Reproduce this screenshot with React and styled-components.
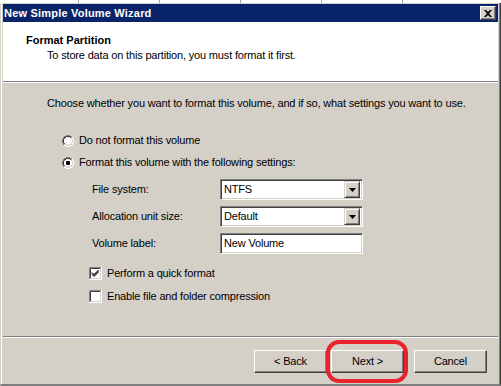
import React from 'react';
import styled, { createGlobalStyle } from 'styled-components';

const GlobalStyle = createGlobalStyle`
  html, body {
    margin: 0;
    padding: 0;
    background: #ffffff;
  }
  body {
    font-family: 'Liberation Sans', Arial, sans-serif;
    font-size: 11px;
    letter-spacing: -0.17px;
    color: #000000;
  }
`;

const Page = styled.div`
  width: 501px;
  height: 386px;
  display: flex;
  flex-direction: column;
  overflow: hidden;
`;

const TopStrip = styled.div`
  height: 3px;
  flex: none;
  background: #ffffff;
  display: flex;
  gap: 80px;
  padding-left: 78px;
  & > span {
    width: 1px;
    height: 3px;
    background: #a0a0a0;
  }
`;

const Frame = styled.div`
  flex: 1;
  display: flex;
  flex-direction: column;
  background: #d4d0c8;
  border-left: 1px solid #d4d0c8;
  border-right: 1px solid #404040;
  border-bottom: 2px solid #808080;
  box-shadow: inset 1px 0 0 #ffffff, inset -1px 0 0 #808080;
  padding: 1px 2px 0 2px;
`;

const TitleBar = styled.div`
  height: 18px;
  flex: none;
  background: #0a246a;
  display: flex;
  align-items: center;
  justify-content: space-between;
  padding: 0 2px 0 1px;
`;

const Title = styled.span`
  color: #ffffff;
  font-weight: bold;
  font-size: 11px;
  letter-spacing: 0.2px;
`;

const CloseButton = styled.div`
  width: 16px;
  height: 14px;
  box-sizing: border-box;
  background: #d4d0c8;
  border-top: 1px solid #ffffff;
  border-left: 1px solid #ffffff;
  border-right: 1px solid #404040;
  border-bottom: 1px solid #404040;
  box-shadow: inset -1px -1px 0 #808080;
  display: flex;
  align-items: center;
  justify-content: center;
`;

const Header = styled.div`
  height: 59px;
  flex: none;
  background: #ffffff;
  padding: 12px 0 0 23px;
  box-sizing: border-box;
`;

const HeaderTitle = styled.div`
  font-weight: bold;
  font-size: 11px;
  line-height: 13px;
  letter-spacing: 0;
`;

const HeaderText = styled.div`
  margin-top: 2px;
  padding-left: 21px;
  line-height: 13px;
`;

const Rule = styled.div`
  height: 1px;
  flex: none;
  background: #808080;
  border-bottom: 1px solid #ffffff;
`;

const Body = styled.div`
  flex: 1;
  padding: 14px 0 0 44px;
  display: flex;
  flex-direction: column;
`;

const Intro = styled.div`
  line-height: 13px;
  margin-bottom: 24px;
`;

const Options = styled.div`
  padding-left: 15px;
  display: flex;
  flex-direction: column;
  gap: 9px;
`;

const OptionRow = styled.label`
  display: flex;
  align-items: center;
  gap: 5px;
  height: 13px;
  line-height: 13px;
`;

const Settings = styled.div`
  display: grid;
  grid-template-columns: 128px 143px;
  row-gap: 6px;
  padding-left: 45px;
  margin-top: 10px;
  align-items: center;
`;

const FieldLabel = styled.span`
  line-height: 13px;
`;

const Sunken = styled.div`
  height: 21px;
  box-sizing: border-box;
  background: #ffffff;
  border-top: 1px solid #808080;
  border-left: 1px solid #808080;
  border-right: 1px solid #ffffff;
  border-bottom: 1px solid #ffffff;
  box-shadow: inset 1px 1px 0 #404040, inset -1px -1px 0 #d4d0c8;
  display: flex;
  align-items: center;
  padding: 2px 2px 2px 3px;
`;

const FieldValue = styled.span`
  flex: 1;
  line-height: 13px;
`;

const DropButton = styled.div`
  width: 16px;
  height: 17px;
  box-sizing: border-box;
  background: #d4d0c8;
  border-top: 1px solid #d4d0c8;
  border-left: 1px solid #d4d0c8;
  border-right: 1px solid #404040;
  border-bottom: 1px solid #404040;
  box-shadow: inset 1px 1px 0 #ffffff, inset -1px -1px 0 #808080;
  display: flex;
  align-items: center;
  justify-content: center;
`;

const Checks = styled.div`
  display: flex;
  flex-direction: column;
  gap: 10px;
  padding-left: 42px;
  margin-top: 13px;
`;

const Footer = styled.div`
  height: 45px;
  flex: none;
  display: flex;
  justify-content: flex-end;
  align-items: center;
  padding-right: 11px;
  padding-top: 1px;
`;

const ButtonGroup = styled.div`
  display: flex;
  gap: 4px;
  margin-right: 10px;
`;

const Button = styled.div`
  position: relative;
  width: 73px;
  height: 23px;
  box-sizing: border-box;
  background: #d4d0c8;
  border-top: 1px solid #ffffff;
  border-left: 1px solid #ffffff;
  border-right: 1px solid #404040;
  border-bottom: 1px solid #404040;
  box-shadow: inset -1px -1px 0 #808080;
  display: flex;
  align-items: center;
  justify-content: center;
  line-height: 13px;
`;

const Highlight = styled.div`
  position: absolute;
  left: -6px;
  right: -5px;
  top: -11px;
  bottom: -11px;
  border: 4px solid #e8232c;
  border-radius: 13px;
  pointer-events: none;
`;

const Radio = ({ checked }) => (
  <svg width="12" height="12" viewBox="0 0 12 12">
    <path d="M4 0.5h4M2 1.5h2M8 1.5h2M1.5 2v2M0.5 4v4M1.5 8v2" stroke="#808080" />
    <path d="M4 1.5h4M2 2.5h2M8 2.5h1M2.5 3v1M1.5 4v4M2.5 8v1" stroke="#404040" />
    <path d="M10.5 2v2M11.5 4v4M10.5 8v2M2 10.5h2M8 10.5h2M4 11.5h4" stroke="#ffffff" />
    <path d="M9.5 3v1M10.5 4v4M9.5 8v1M3 9.5h1M8 9.5h1M4 10.5h4" stroke="#d4d0c8" />
    <path d="M4 2.5h4v1h1.5v1h0.5v3h-0.5v1h-1.5v1h-4v-1h-1.5v-1h-0.5v-3h0.5v-1h1.5z" fill="#ffffff" />
    {checked && <rect x="4" y="4" width="4" height="4" rx="1" fill="#000000" />}
  </svg>
);

const Checkbox = ({ checked }) => (
  <svg width="13" height="13" viewBox="0 0 13 13">
    <rect x="0" y="0" width="13" height="13" fill="#ffffff" />
    <path d="M0.5 12V0.5H12" stroke="#808080" fill="none" />
    <path d="M1.5 11V1.5H11" stroke="#404040" fill="none" />
    <path d="M0 12.5H12.5V0" stroke="#ffffff" fill="none" />
    <path d="M1 11.5H11.5V1" stroke="#d4d0c8" fill="none" />
    {checked && (
      <path d="M3 5.5l2 2 4.5-4.5M3 6.5l2 2 4.5-4.5M3 7.5l2 2 4.5-4.5" stroke="#000000" fill="none" strokeWidth="1" />
    )}
  </svg>
);

const Arrow = () => (
  <svg width="7" height="4" viewBox="0 0 7 4">
    <path d="M0 0h7L3.5 4z" fill="#000000" />
  </svg>
);

const CloseGlyph = () => (
  <svg width="8" height="7" viewBox="0 0 8 7">
    <path d="M0 0h2l2 2 2-2h2L5 3.5 8 7H6L4 5 2 7H0l3-3.5z" fill="#000000" />
  </svg>
);

const Combo = ({ value }) => (
  <Sunken>
    <FieldValue>{value}</FieldValue>
    <DropButton>
      <Arrow />
    </DropButton>
  </Sunken>
);

export default function App() {
  return (
    <Page>
      <GlobalStyle />
      <TopStrip>
        <span />
        <span />
        <span />
        <span />
        <span />
      </TopStrip>
      <Frame>
        <TitleBar>
          <Title>New Simple Volume Wizard</Title>
          <CloseButton>
            <CloseGlyph />
          </CloseButton>
        </TitleBar>
        <Header>
          <HeaderTitle>Format Partition</HeaderTitle>
          <HeaderText>To store data on this partition, you must format it first.</HeaderText>
        </Header>
        <Rule />
        <Body>
          <Intro>
            Choose whether you want to format this volume, and if so, what settings you want to use.
          </Intro>
          <Options>
            <OptionRow>
              <Radio />
              <span>Do not format this volume</span>
            </OptionRow>
            <OptionRow>
              <Radio checked />
              <span>Format this volume with the following settings:</span>
            </OptionRow>
          </Options>
          <Settings>
            <FieldLabel>File system:</FieldLabel>
            <Combo value="NTFS" />
            <FieldLabel>Allocation unit size:</FieldLabel>
            <Combo value="Default" />
            <FieldLabel>Volume label:</FieldLabel>
            <Sunken>
              <FieldValue>New Volume</FieldValue>
            </Sunken>
          </Settings>
          <Checks>
            <OptionRow>
              <Checkbox checked />
              <span>Perform a quick format</span>
            </OptionRow>
            <OptionRow>
              <Checkbox />
              <span>Enable file and folder compression</span>
            </OptionRow>
          </Checks>
        </Body>
        <Rule />
        <Footer>
          <ButtonGroup>
            <Button>&lt; Back</Button>
            <Button>
              Next &gt;
              <Highlight />
            </Button>
          </ButtonGroup>
          <Button>Cancel</Button>
        </Footer>
      </Frame>
    </Page>
  );
}
